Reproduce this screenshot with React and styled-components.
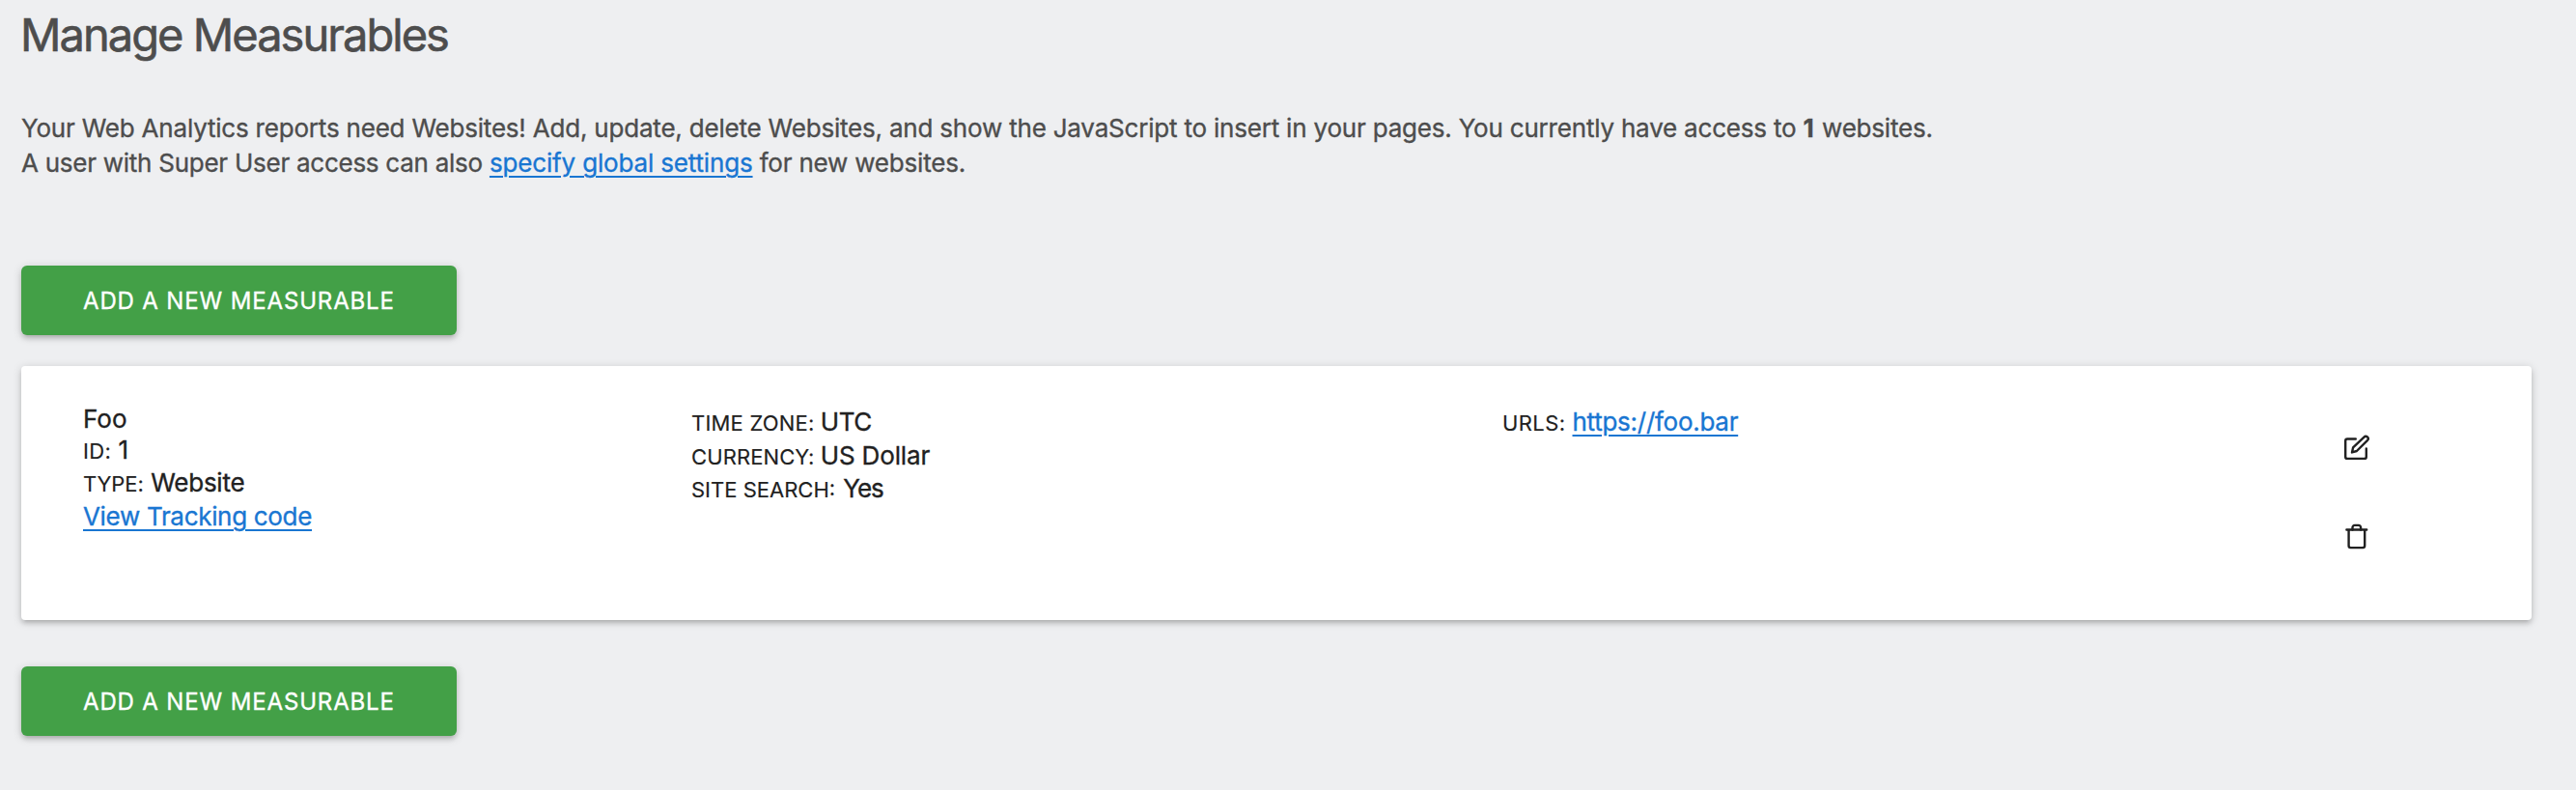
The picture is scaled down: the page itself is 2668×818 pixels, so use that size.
import React from 'react';
import styled, { createGlobalStyle, css } from 'styled-components';

const GlobalStyle = createGlobalStyle`
  * { box-sizing: border-box; }
  body {
    margin: 0;
    background: #eeeff1;
    font-family: Inter, "Liberation Sans", sans-serif;
    -webkit-font-smoothing: antialiased;
    -webkit-text-stroke-width: 0.35px;
  }
`;

const elevation = css`
  box-shadow: 0 4px 4px 0 rgba(0, 0, 0, 0.1), 0 6px 2px -4px rgba(0, 0, 0, 0.05),
    0 2px 10px 0 rgba(0, 0, 0, 0.18);
`;

const Page = styled.main`
  display: flex;
  flex-direction: column;
  align-items: flex-start;
  min-height: 818px;
  padding: 8px 46px 56px 22px;
`;

const Title = styled.h1`
  margin: 0 0 51px -1px;
  font-size: 47px;
  line-height: 56px;
  font-weight: 400;
  letter-spacing: -1.96px;
  color: #4d4d4d;
  -webkit-text-stroke-width: 0.6px;
`;

const Intro = styled.p`
  margin: 0 0 88px;
  font-size: 26px;
  line-height: 36px;
  letter-spacing: -0.2px;
  color: #4d4d4d;
  white-space: nowrap;
`;

const Count = styled.strong`
  font-weight: 700;
  letter-spacing: 1.2px;
`;

const Spaced = styled.span`
  letter-spacing: ${(p) => p.$tracking}px;
`;

const Link = styled.a`
  color: #1976d2;
  letter-spacing: ${(p) => p.$tracking}px;
  margin-left: ${(p) => p.$shift || 0}px;
  text-decoration: underline;
  text-decoration-thickness: 2px;
  text-underline-offset: 4px;
`;

const AddButton = styled.button`
  width: 451px;
  height: 72px;
  padding: 2px 0 0 64px;
  border: 0;
  border-radius: 6px;
  background: #43a047;
  color: #fff;
  font: 400 24px/70px Inter, "Liberation Sans", sans-serif;
  letter-spacing: 0.85px;
  text-align: left;
  text-transform: uppercase;
  white-space: nowrap;
  ${elevation}
`;

const Card = styled.section`
  display: grid;
  grid-template-columns: 630px 840px 871px 28px;
  align-self: stretch;
  height: 263px;
  margin: 32px 0 48px;
  padding: 40px 0 0 64px;
  border-radius: 4px;
  background: #fff;
  color: #212121;
  font-size: 26px;
  white-space: nowrap;
  ${elevation}
`;

const Column = styled.div`
  display: flex;
  flex-direction: column;
  padding-top: ${(p) => p.$top || 0}px;
`;

const Name = styled.div`
  line-height: 30px;
`;

const Line = styled.div`
  line-height: ${(p) => p.$height || 34.5}px;
`;

const Label = styled.span`
  font-size: 22px;
  line-height: 1;
  letter-spacing: ${(p) => p.$tracking || 0}px;
  text-transform: uppercase;
  -webkit-text-stroke-width: 0.15px;
`;

const Value = styled.span`
  letter-spacing: ${(p) => p.$tracking || 0}px;
  margin-left: ${(p) => p.$shift || 0}px;
`;

const Actions = styled.div`
  display: flex;
  flex-direction: column;
  gap: 63px;
  padding-top: 31px;
`;

const Icon = styled.svg`
  display: block;
  width: 28px;
  height: 28px;
  fill: none;
  stroke: #212121;
  stroke-width: 2.4;
  stroke-linecap: round;
  stroke-linejoin: round;
`;

const EditIcon = () => (
  <Icon viewBox="0 0 28 28">
    <path d="M12.8 4.5H4.2a2 2 0 0 0-2 2V22.900a2 2 0 0 0 2 2h17.600a2 2 0 0 0 2-2v-8.500" />
    <path d="M9 18.4l1.1-5L21.500 2.600a2.350 2.350 0 0 1 3.600 3.200L13.900 17z" />
  </Icon>
);

const TrashIcon = () => (
  <Icon viewBox="0 0 28 28">
    <path d="M3.4 7.500h20.800M5.600 7.500v16.600a2 2 0 0 0 2 2h12.600a2 2 0 0 0 2-2V7.500" />
    <path d="M9.500 7.500V5.300a2.400 2.400 0 0 1 2.400-2.400h3.800a2.400 2.400 0 0 1 2.400 2.400v2.200" />
  </Icon>
);

export default function App() {
  return (
    <>
      <GlobalStyle />
      <Page>
        <Title>Manage Measurables</Title>
        <Intro>
          Your Web Analytics reports need Websites! Add, update, delete Websites, and show the
          JavaScript to insert in your pages. You currently have access to <Count>1</Count>
          <Spaced $tracking={-0.2}> websites.</Spaced>
          <br />
          <Spaced $tracking={-0.26}>A user with Super User access can also </Spaced>
          <Link $tracking={-0.16}>specify global settings</Link> for new websites.
        </Intro>
        <AddButton>Add a new measurable</AddButton>
        <Card>
          <Column>
            <Name>Foo</Name>
            <Line $height={34}>
              <Label $tracking={0.3}>ID: </Label>
              <Value $shift={1}>1</Value>
            </Line>
            <Line $height={34}>
              <Label $tracking={-0.1}>Type: </Label>
              <Value $tracking={-0.25} $shift={1.5}>Website</Value>
            </Line>
            <Line $height={35}>
              <Link $tracking={-0.32}>View Tracking code</Link>
            </Line>
          </Column>
          <Column $top={1}>
            <Line>
              <Label $tracking={0.2}>Time zone: </Label>
              <Value $tracking={-0.5}>UTC</Value>
            </Line>
            <Line>
              <Label $tracking={0.1}>Currency: </Label>
              <Value $tracking={-0.15}>US Dollar</Value>
            </Line>
            <Line>
              <Label>Site search: </Label>
              <Value $tracking={-1} $shift={2}>Yes</Value>
            </Line>
          </Column>
          <Column $top={1}>
            <Line>
              <Label $tracking={0.4}>URLs: </Label>
              <Link $tracking={-0.27} $shift={0.5}>https://foo.bar</Link>
            </Line>
          </Column>
          <Actions>
            <EditIcon />
            <TrashIcon />
          </Actions>
        </Card>
        <AddButton>Add a new measurable</AddButton>
      </Page>
    </>
  );
}
